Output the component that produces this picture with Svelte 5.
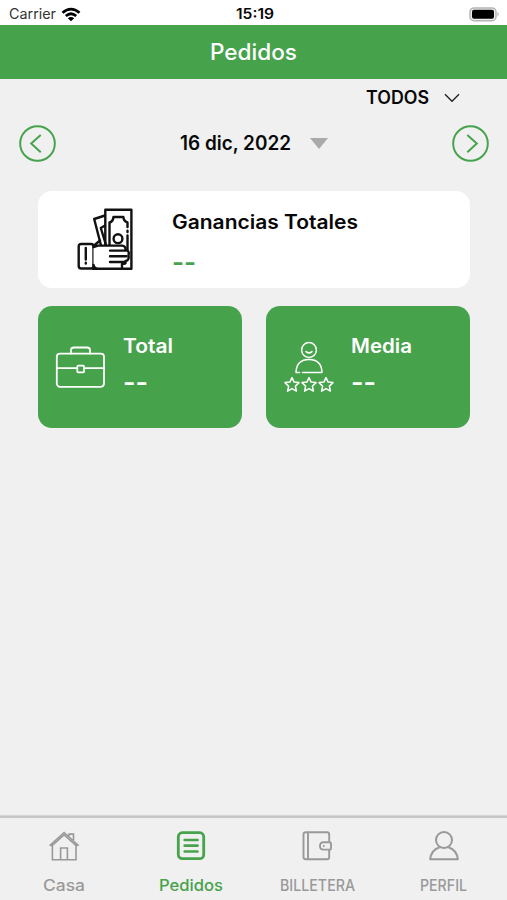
<script lang="ts">
  let active = $state("Pedidos");

  const tabs = [
    { label: "Casa", icon: "home", width: 42 },
    { label: "Pedidos", icon: "list", width: 64 },
    { label: "BILLETERA", icon: "wallet", width: 75 },
    { label: "PERFIL", icon: "user", width: 47 },
  ];
</script>

{#snippet text(label: string, width: number, size: number, weight: number)}
  <svg class="text" {width} height="32" role="img" aria-label={label}>
    <text x="0" y="23" textLength={width} lengthAdjust="spacingAndGlyphs" font-size={size} font-weight={weight}>{label}</text>
  </svg>
{/snippet}

<div class="screen">
  <div class="status">
    <div class="carrier">
      {@render text("Carrier", 47, 14.2, 400)}
      <svg class="wifi" width="20" height="15" viewBox="0 0 20 15">
        <path d="M1.5 5.8Q10-1.7 18.5 5.8M4.8 9Q10 4.5 15.2 9" fill="none" stroke="#000" stroke-width="2.7" />
        <path d="M6.8 11.2Q10 8.7 13.2 11.2L10 14.3Z" />
      </svg>
    </div>
    {@render text("15:19", 38, 14.2, 600)}
    <div class="power">
      <svg width="31" height="15" viewBox="0 0 31 15">
        <rect x="1" y=".9" width="26" height="12.8" rx="4" fill="#eee" stroke="#b5b5b5" stroke-width="1.5" />
        <rect x="3" y="2.8" width="22" height="9" rx="2" />
        <path d="M28.5 5Q31 7.2 28.5 9.5Z" fill="#aaa" />
      </svg>
    </div>
  </div>

  <header>{@render text("Pedidos", 87, 22.2, 500)}</header>

  <div class="filter">
    {@render text("TODOS", 63, 18, 600)}
    <svg width="16" height="10" viewBox="0 0 16 10">
      <path d="M1 1.2 8 8.2 15 1.2" fill="none" stroke="#222" stroke-width="1.4" />
    </svg>
  </div>

  <div class="date">
    <button aria-label="Anterior">
      <svg width="37" height="37" viewBox="0 0 38 38">
        <circle cx="19" cy="19" r="17.8" />
        <path d="M22.3 10.2 12.5 19 22.3 28" />
      </svg>
    </button>
    <div class="day">
      {@render text("16 dic, 2022", 111, 19.5, 600)}
      <svg width="18" height="11" viewBox="0 0 18 11"><path d="M0 0H18L9 11Z" fill="#aaa" /></svg>
    </div>
    <button aria-label="Siguiente">
      <svg width="37" height="37" viewBox="0 0 38 38">
        <circle cx="19" cy="19" r="17.8" />
        <path d="M15.7 10.2 25.5 19 15.7 28" />
      </svg>
    </button>
  </div>

  <main>
    <section class="card earnings">
      <svg class="icon" width="70" height="80" viewBox="0 0 70 80" stroke="#111" stroke-width="2.4">
        <path d="M35.3 60V9.8H61.4V68.7H23" />
        <path d="M35 15.5 24.2 19 31 45.5M35 25.5 30.8 28 36 45" />
        <path d="M39.5 45V22.5Q43 21.5 43.5 17H53.3Q54 21.5 57.5 22.5V27M57.5 35.5V52M57.5 30.8V32" />
        <circle cx="48" cy="38.7" r="4.4" />
        <rect x="8.7" y="44" width="14.8" height="24.5" rx="2.5" />
        <path d="M15.8 48V59.5M15.8 62.8V63.5M23.5 46 30 40.5" />
        <path d="M23.5 47 28 45.6H52Q56 46 55.5 50Q59.7 50.5 58.5 55Q59.5 60.5 55.5 61V62.5Q56 64 52 64V68.7H28Q24 68.5 23.5 65" fill="#fff" />
        <path d="M40 50.6H55.5M40 56.3H56.5M40 62H54" />
      </svg>
      <div class="info">
        {@render text("Ganancias Totales", 186, 19.5, 600)}
        <div class="value">{@render text("--", 24, 24, 700)}</div>
      </div>
    </section>

    <div class="pair">
      <section class="card stat">
        <svg class="icon" width="52" height="52" viewBox="0 0 52 52" stroke="#fff" stroke-width="1.8">
          <path d="M16 12.5V9Q16 6.5 19 6.5H32Q35 6.5 35 9V12.5" />
          <rect x="1.8" y="12.6" width="47.2" height="33.2" rx="3.2" />
          <path d="M2 27.2H22M29.5 27.2H49" />
          <rect x="22.3" y="24.7" width="6.8" height="6.6" rx="1" />
        </svg>
        <div class="info">
          {@render text("Total", 50, 19.5, 600)}
          <div class="value">{@render text("--", 25, 24, 700)}</div>
        </div>
      </section>
      <section class="card stat">
        <svg class="icon" width="52" height="52" viewBox="0 0 52 52" stroke="#fff" stroke-width="1.5">
          <circle cx="26" cy="9" r="7.4" />
          <path d="M23 10.6Q26 13.2 29 10.6M16.5 31.4H13Q13.5 18.5 26 18.5Q38.5 18.5 39 31.4H19.5" />
          {#each [9, 26, 43] as x}
            <path transform="translate({x} 43.6)" d="M0-7 2.1-2.5 7-2 3.4 1.5 4.4 6.5 0 4-4.4 6.5-3.4 1.5-7-2-2.1-2.5Z" />
          {/each}
        </svg>
        <div class="info">
          {@render text("Media", 61, 19.5, 600)}
          <div class="value">{@render text("--", 25, 24, 700)}</div>
        </div>
      </section>
    </div>
  </main>

  <nav>
    {#each tabs as tab}
      <button class="tab" class:active={active === tab.label} onclick={() => (active = tab.label)}>
        <svg width="32" height="32" viewBox="0 0 32 32" fill="none" stroke="currentColor" stroke-width="1.6">
          {#if tab.icon === "home"}
            <path d="M4.4 14V29.7H28V14M12.6 29.5V18H19.4V29.5M2.3 15 16.1 2.5 30 15 28.4 15.8 16.1 4.8 3.8 15.8ZM21 6V4.1H25.5V10" />
          {:else if tab.icon === "list"}
            <rect x="3.3" y="2.7" width="25.4" height="26" rx="4" stroke-width="2.8" />
            <path d="M9.7 10H22.5M9.7 15.7H22.5M9.7 21.5H22.5" stroke-width="2.7" stroke-linecap="round" />
          {:else if tab.icon === "wallet"}
            <g stroke-width="1.9">
              <path d="M28.2 11.8V4.5Q28.2 2.3 26 2.3H4.8Q2.5 2.3 2.5 4.5V27Q2.5 29.3 4.8 29.3H26Q28.2 29.3 28.2 27V20M7 2.3V29.3" />
              <path d="M28.5 12.2H22.5Q19 12.2 19 16Q19 19.6 22.5 19.6H28.5Q30 19.6 30 18V13.8Q30 12.2 28.5 12.2Z" />
              <path d="M22 16H23.5" />
            </g>
          {:else}
            <circle cx="16" cy="10" r="8" stroke-width="2" />
            <path d="M11.5 17.2Q3 20 2.2 29.3H29.8Q29 20 20.5 17.2" stroke-width="2" stroke-linejoin="round" />
          {/if}
        </svg>
        {@render text(tab.label, tab.width, 15.6, 500)}
      </button>
    {/each}
  </nav>
</div>

<style>
  :global(body) {
    margin: 0;
  }

  .screen {
    display: flex;
    flex-direction: column;
    width: 507px;
    height: 900px;
    background: #f0f0f0;
    color: #080808;
    font-family: Inter, "Liberation Sans", sans-serif;
    overflow: hidden;
  }

  svg {
    display: block;
    flex-shrink: 0;
  }

  .text {
    fill: currentColor;
    overflow: visible;
  }

  button {
    border: 0;
    padding: 0;
    background: none;
    font: inherit;
    color: inherit;
    cursor: pointer;
  }

  .status {
    display: grid;
    grid-template-columns: 1fr auto 1fr;
    align-items: center;
    height: 25px;
    padding: 0 7px 0 9px;
    background: #fff;
  }

  .status .text {
    margin-top: -4px;
  }

  .carrier {
    display: flex;
    align-items: center;
    gap: 5px;
    color: #333;
  }

  .power {
    display: flex;
    justify-content: flex-end;
  }

  header {
    display: flex;
    justify-content: center;
    height: 44px;
    padding-top: 10px;
    background: #46a24b;
    color: #fff;
  }

  header .text {
    margin-top: 2px;
  }

  .filter {
    display: flex;
    justify-content: flex-end;
    align-items: center;
    gap: 15px;
    height: 37px;
    padding-right: 47px;
  }

  .filter .text {
    margin-top: -2px;
  }

  .date {
    display: flex;
    justify-content: space-between;
    align-items: center;
    height: 56px;
    padding: 0 18px 0 19px;
  }

  .date button {
    fill: none;
    stroke: #46a24b;
    stroke-width: 2;
    margin-top: -1px;
  }

  .day {
    display: flex;
    align-items: center;
    gap: 19px;
    margin-top: -2px;
  }

  main {
    display: flex;
    flex-direction: column;
    flex: 1;
    gap: 18px;
    padding: 19px 37px 0 38px;
  }

  .card {
    display: flex;
    border-radius: 14px;
  }

  .icon {
    fill: none;
    stroke-linejoin: round;
    stroke-linecap: round;
  }

  .earnings {
    height: 97px;
    padding-left: 32px;
    background: #fff;
  }

  .earnings .icon {
    margin-top: 9px;
  }

  .earnings .info {
    padding: 15px 0 0 32px;
  }

  .earnings .value {
    color: #46a24b;
    margin-top: 10px;
  }

  .pair {
    display: grid;
    grid-template-columns: 1fr 1fr;
    gap: 24px;
  }

  .stat {
    height: 122px;
    padding-left: 17px;
    background: #46a24b;
    color: #fff;
  }

  .stat .icon {
    margin-top: 35px;
  }

  .stat .info {
    padding: 24px 0 0 16px;
  }

  .stat .value {
    margin-top: 6px;
  }

  nav {
    display: grid;
    grid-template-columns: repeat(4, 1fr);
    height: 82px;
    padding-left: 1px;
    border-top: 2px solid #c5c5c5;
    box-shadow: 0 -1px 1px #d8d8d8;
  }

  .tab {
    display: flex;
    flex-direction: column;
    align-items: center;
    justify-content: flex-start;
    padding-top: 12px;
    color: #999;
  }

  .tab .text {
    margin-top: 6px;
  }

  .tab.active {
    color: #46a24b;
  }
</style>
